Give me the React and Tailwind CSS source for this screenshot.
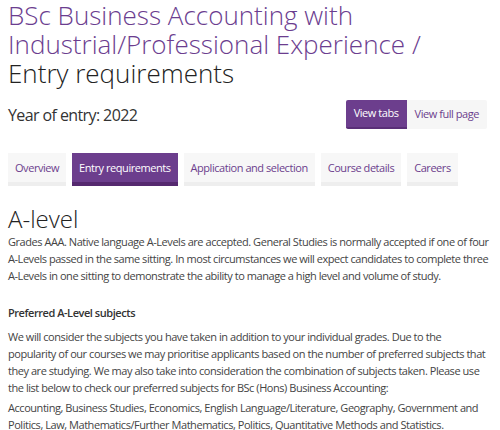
import React from "react";

const tabs = [
  "Overview",
  "Entry requirements",
  "Application and selection",
  "Course details",
  "Careers",
];

export default function App() {
  return (
    <div className="px-2 bg-white text-[#3c3c3c] font-['Open_Sans',sans-serif]">
      <h1 className="text-[26px] leading-[29px] font-light text-[#6b3d8f] pt-[1px]">
        BSc Business Accounting with
        <br />
        Industrial/Professional Experience /
        <br />
        <span className="text-[#222]">Entry requirements</span>
      </h1>

      <div className="flex items-center justify-between mt-[12px]">
        <div className="text-[16px] tracking-[-0.6px] text-[#333]">Year of entry: 2022</div>
        <div className="flex mr-[5px] text-[11px] tracking-[-0.45px]">
          <button className="h-[29px] px-[8px] text-white bg-[#6c3e8d] rounded-l-[2px] border-b-2 border-[#5a2f78]">
            View tabs
          </button>
          <button className="h-[29px] px-[8px] text-[#6c3e8d] bg-[#f6f6f6] rounded-r-[2px]">
            View full page
          </button>
        </div>
      </div>

      <div className="flex gap-[6px] mt-[24px] text-[11px] tracking-[-0.45px]">
        {tabs.map((t) => {
          const active = t === "Entry requirements";
          return (
            <div
              key={t}
              className={
                active
                  ? "h-[33px] px-[7px] pt-[1px] flex items-center whitespace-nowrap text-white bg-[#6c3e8d] border-b-4 border-[#55296f]"
                  : "h-[33px] px-[7px] pt-[1px] flex items-center whitespace-nowrap text-[#6c3e8d] bg-[#f7f7f7] border-b-4 border-[#eeeeee]"
              }
            >
              {t}
            </div>
          );
        })}
      </div>

      <h2 className="text-[24px] font-light text-[#222] mt-[18px] leading-[30px]">A-level</h2>

      <div className="text-[11px] tracking-[-0.45px] leading-[17px] text-[#444] mt-[-1px]">
        <p>
          Grades AAA. Native language A-Levels are accepted. General Studies is normally accepted if one of four
          <br />
          A-Levels passed in the same sitting. In most circumstances we will expect candidates to complete three
          <br />
          A-Levels in one sitting to demonstrate the ability to manage a high level and volume of study.
        </p>
        <p className="font-semibold text-[#333] mt-[20px]">Preferred A-Level subjects</p>
        <p className="mt-[7px]">
          We will consider the subjects you have taken in addition to your individual grades. Due to the
          <br />
          popularity of our courses we may prioritise applicants based on the number of preferred subjects that
          <br />
          they are studying. We may also take into consideration the combination of subjects taken. Please use
          <br />
          the list below to check our preferred subjects for BSc (Hons) Business Accounting:
        </p>
        <p className="mt-[3px]">
          Accounting, Business Studies, Economics, English Language/Literature, Geography, Government and
          <br />
          Politics, Law, Mathematics/Further Mathematics, Politics, Quantitative Methods and Statistics.
        </p>
      </div>
    </div>
  );
}
